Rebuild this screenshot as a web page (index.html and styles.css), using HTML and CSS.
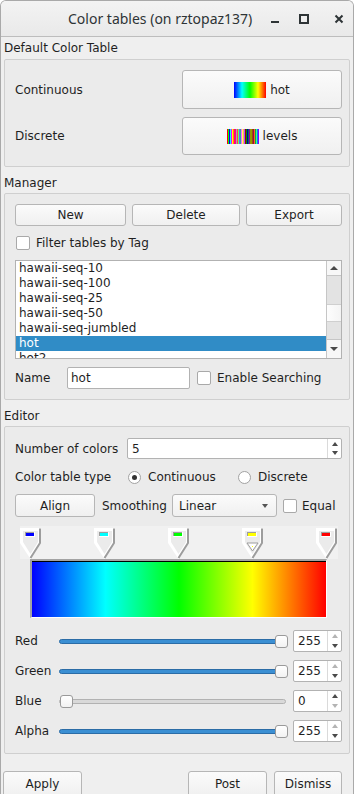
FILE: index.html
```html
<!DOCTYPE html>
<html lang="en">
<head>
  <meta charset="UTF-8">
  <title>Color tables</title>
  <link rel="stylesheet" href="styles.css">
</head>
<body>
<div class="window">

  <!-- Title bar -->
  <div class="titlebar">
    <span class="title">Color tables (on rztopaz137)</span>
    <div class="wm-buttons">
      <svg class="wm wm-min" width="10" height="10" viewBox="0 0 10 10"><path d="M1 8h8" stroke="#2e3436" stroke-width="2"/></svg>
      <svg class="wm wm-max" width="10" height="10" viewBox="0 0 10 10"><rect x="1" y="1" width="8" height="8" fill="none" stroke="#2e3436" stroke-width="2"/></svg>
      <svg class="wm wm-close" width="10" height="10" viewBox="0 0 10 10"><path d="M1.5 1.5l7 7M8.5 1.5l-7 7" stroke="#2e3436" stroke-width="2"/></svg>
    </div>
  </div>

  <div class="content">

    <!-- Default color table -->
    <div class="group-label first">Default Color Table</div>
    <div class="group defaults">
      <div class="def-row">
        <span>Continuous</span>
        <div class="btn big"><span class="swatch hot"></span>hot</div>
      </div>
      <div class="def-row">
        <span>Discrete</span>
        <div class="btn big small"><span class="swatch levels"></span>levels</div>
      </div>
    </div>

    <!-- Manager -->
    <div class="group-label">Manager</div>
    <div class="group manager">
      <div class="mgr-buttons">
        <div class="btn">New</div>
        <div class="btn">Delete</div>
        <div class="btn">Export</div>
      </div>
      <div class="check-row">
        <span class="check"></span>
        <span>Filter tables by Tag</span>
      </div>
      <div class="list">
        <div class="list-items">
          <div class="list-item">hawaii-seq-10</div>
          <div class="list-item">hawaii-seq-100</div>
          <div class="list-item">hawaii-seq-25</div>
          <div class="list-item">hawaii-seq-50</div>
          <div class="list-item">hawaii-seq-jumbled</div>
          <div class="list-item selected">hot</div>
          <div class="list-item">hot2</div>
        </div>
        <div class="scrollbar">
          <div class="sb-btn"><span class="tri-up"></span></div>
          <div class="sb-page"></div>
          <div class="sb-thumb"></div>
          <div class="sb-page"></div>
          <div class="sb-btn down"><span class="tri-down"></span></div>
        </div>
      </div>
      <div class="name-row">
        <span class="name-label">Name</span>
        <div class="input">hot</div>
        <span class="check"></span>
        <span>Enable Searching</span>
      </div>
    </div>

    <!-- Editor -->
    <div class="group-label">Editor</div>
    <div class="group editor">
      <div class="num-row">
        <span class="num-label">Number of colors</span>
        <div class="spin wide">
          <span class="spin-val">5</span>
          <div class="spin-arrows">
            <span class="arr"><span class="tri-up"></span></span>
            <span class="arr"><span class="tri-down"></span></span>
          </div>
        </div>
      </div>

      <div class="type-row">
        <span class="type-label">Color table type</span>
        <span class="radio on"></span>
        <span class="radio-text">Continuous</span>
        <span class="radio"></span>
        <span>Discrete</span>
      </div>

      <div class="align-row">
        <div class="btn align-btn">Align</div>
        <span class="smooth-label">Smoothing</span>
        <div class="combo">
          <span>Linear</span>
          <span class="tri-down"></span>
        </div>
        <span class="check"></span>
        <span>Equal</span>
      </div>

      <div class="ct-editor">
        <div class="marker-strip">
          <svg class="marker" style="left:0px" width="21" height="31" viewBox="0 0 21 31">
            <polygon points="0,0 21,0 21,15 10.5,31 0,15" fill="#fff"/>
            <polygon points="3,3 18,3 18,14 10.5,26 3,14" fill="#ebebeb"/>
            <polyline points="20,0.5 20,15 10.5,30" fill="none" stroke="#9d9d9d" stroke-width="2"/>
            <rect x="5" y="4" width="10" height="5" fill="#fff"/>
            <rect x="5" y="4" width="9" height="4" fill="#9d9d9d"/>
            <rect x="6" y="5" width="8" height="3" fill="#0000ff"/>
          </svg>
          <svg class="marker" style="left:74px" width="21" height="31" viewBox="0 0 21 31">
            <polygon points="0,0 21,0 21,15 10.5,31 0,15" fill="#fff"/>
            <polygon points="3,3 18,3 18,14 10.5,26 3,14" fill="#ebebeb"/>
            <polyline points="20,0.5 20,15 10.5,30" fill="none" stroke="#9d9d9d" stroke-width="2"/>
            <rect x="5" y="4" width="10" height="5" fill="#fff"/>
            <rect x="5" y="4" width="9" height="4" fill="#9d9d9d"/>
            <rect x="6" y="5" width="8" height="3" fill="#00ffff"/>
          </svg>
          <svg class="marker" style="left:148px" width="21" height="31" viewBox="0 0 21 31">
            <polygon points="0,0 21,0 21,15 10.5,31 0,15" fill="#fff"/>
            <polygon points="3,3 18,3 18,14 10.5,26 3,14" fill="#ebebeb"/>
            <polyline points="20,0.5 20,15 10.5,30" fill="none" stroke="#9d9d9d" stroke-width="2"/>
            <rect x="5" y="4" width="10" height="5" fill="#fff"/>
            <rect x="5" y="4" width="9" height="4" fill="#9d9d9d"/>
            <rect x="6" y="5" width="8" height="3" fill="#00ff00"/>
          </svg>
          <svg class="marker" style="left:222px" width="21" height="31" viewBox="0 0 21 31">
            <polygon points="0,0 21,0 21,15 10.5,31 0,15" fill="#fff"/>
            <polygon points="3,3 18,3 18,14 10.5,26 3,14" fill="#ebebeb"/>
            <polyline points="20,0.5 20,15 10.5,30" fill="none" stroke="#9d9d9d" stroke-width="2"/>
            <polygon points="5,15 16,15 10.5,23" fill="#fff" stroke="#9d9d9d"/>
            <rect x="10" y="18" width="1" height="1" fill="#ffff00"/>
            <rect x="5" y="4" width="10" height="5" fill="#fff"/>
            <rect x="5" y="4" width="9" height="4" fill="#9d9d9d"/>
            <rect x="6" y="5" width="8" height="3" fill="#ffff00"/>
          </svg>
          <svg class="marker" style="left:296px" width="21" height="31" viewBox="0 0 21 31">
            <polygon points="0,0 21,0 21,15 10.5,31 0,15" fill="#fff"/>
            <polygon points="3,3 18,3 18,14 10.5,26 3,14" fill="#ebebeb"/>
            <polyline points="20,0.5 20,15 10.5,30" fill="none" stroke="#9d9d9d" stroke-width="2"/>
            <rect x="5" y="4" width="10" height="5" fill="#fff"/>
            <rect x="5" y="4" width="9" height="4" fill="#9d9d9d"/>
            <rect x="6" y="5" width="8" height="3" fill="#ff0000"/>
          </svg>
        </div>
        <div class="bar"><div class="bar-grad"></div></div>
      </div>

      <div class="sliders">
        <div class="slider-row">
          <span class="sl-label">Red</span>
          <div class="track full"><span class="handle" style="left:215px"></span></div>
          <div class="spin small">
            <span class="spin-val">255</span>
            <div class="spin-arrows">
              <span class="arr"><span class="tri-up off"></span></span>
              <span class="arr"><span class="tri-down"></span></span>
            </div>
          </div>
        </div>
        <div class="slider-row">
          <span class="sl-label">Green</span>
          <div class="track full"><span class="handle" style="left:215px"></span></div>
          <div class="spin small">
            <span class="spin-val">255</span>
            <div class="spin-arrows">
              <span class="arr"><span class="tri-up off"></span></span>
              <span class="arr"><span class="tri-down"></span></span>
            </div>
          </div>
        </div>
        <div class="slider-row">
          <span class="sl-label">Blue</span>
          <div class="track"><span class="handle" style="left:0px"></span></div>
          <div class="spin small">
            <span class="spin-val">0</span>
            <div class="spin-arrows">
              <span class="arr"><span class="tri-up"></span></span>
              <span class="arr"><span class="tri-down off"></span></span>
            </div>
          </div>
        </div>
        <div class="slider-row">
          <span class="sl-label">Alpha</span>
          <div class="track full"><span class="handle" style="left:215px"></span></div>
          <div class="spin small">
            <span class="spin-val">255</span>
            <div class="spin-arrows">
              <span class="arr"><span class="tri-up off"></span></span>
              <span class="arr"><span class="tri-down"></span></span>
            </div>
          </div>
        </div>
      </div>
    </div>

    <!-- Dialog buttons -->
    <div class="bottom-row">
      <div class="btn apply">Apply</div>
      <div class="btn post">Post</div>
      <div class="btn dismiss">Dismiss</div>
    </div>
  </div>
</div>
</body>
</html>
```

FILE: styles.css
```css
* {
  box-sizing: border-box;
}

body {
  margin: 0;
  width: 354px;
  height: 794px;
  overflow: hidden;
  background: #fff;
  font-family: "DejaVu Sans", sans-serif;
  font-size: 12px;
  color: #1f1f1f;
}

.window {
  height: 794px;
  background: #efefef;
  border: 1px solid #a9a9a9;
  border-bottom: none;
  border-radius: 6px 6px 0 0;
  overflow: hidden;
}

/* Title bar */
.titlebar {
  height: 36px;
  display: flex;
  align-items: center;
  background: linear-gradient(#f3f3f3, #e9e9e9);
  border-bottom: 1px solid #bdbdbd;
}

.title {
  font-family: "Noto Sans", sans-serif;
  font-size: 14px;
  color: #2e3436;
  margin-left: 67px;
}

.wm-buttons {
  margin-left: auto;
  margin-right: 9px;
  display: flex;
  align-items: center;
}

.wm-min {
  margin-right: 19px;
}

.wm-max {
  margin-right: 25px;
}

/* Groups */
.content {
  padding: 0 3px;
}

.group-label {
  height: 20px;
  line-height: 20px;
  margin-top: 6px;
}

.group-label.first {
  margin-top: 1px;
  height: 21px;
}

.group {
  border: 1px solid #cfcfcf;
  border-radius: 2px;
  background: #ebebeb;
}

.btn {
  background: linear-gradient(#fbfbfb, #f0f0f0);
  border: 1px solid #b6b6b6;
  border-radius: 3px;
  display: flex;
  align-items: center;
  justify-content: center;
  height: 22px;
}

/* Default color table */
.defaults {
  padding: 10px 7px 11px 10px;
  display: flex;
  flex-direction: column;
  gap: 8px;
}

.def-row {
  display: flex;
  align-items: center;
  justify-content: space-between;
}

.btn.big {
  width: 160px;
  height: 39px;
  gap: 4px;
}

.btn.big.small {
  height: 38px;
}

.swatch {
  display: inline-block;
  width: 32px;
  height: 16px;
}

.swatch.hot {
  background: linear-gradient(to right, #0000ff, #00ffff 25%, #00ff00 50%, #ffff00 75%, #ff0000);
}

.swatch.levels {
  height: 15px;
  background: linear-gradient(to right, #ff0000 0 3.33%, #00ff00 3.33% 6.67%, #0000ff 6.67% 10%, #00ffff 10% 13.33%, #ff00ff 13.33% 16.67%, #ffff00 16.67% 20%, #ff8700 20% 23.33%, #ff0087 23.33% 26.67%, #a8a8a8 26.67% 30%, #ff4444 30% 33.33%, #63ff63 33.33% 36.67%, #6363ff 36.67% 40%, #28a5a5 40% 43.33%, #ff63ff 43.33% 46.67%, #ffff63 46.67% 50%, #ffaa63 50% 53.33%, #aa4fff 53.33% 56.67%, #960000 56.67% 60%, #009600 60% 63.33%, #000096 63.33% 66.67%, #006d6d 66.67% 70%, #960096 70% 73.33%, #969600 73.33% 76.67%, #965400 76.67% 80%, #a0004f 80% 83.33%, #ff681c 83.33% 86.67%, #00aa51 86.67% 90%, #44ff7c 90% 93.33%, #0082ff 93.33% 96.67%, #8200ff 96.67% 100%);
}

/* Manager */
.manager {
  padding: 10px 7px 10px 10px;
  display: flex;
  flex-direction: column;
}

.mgr-buttons {
  display: grid;
  grid-template-columns: 111px 108px 1fr;
  column-gap: 6px;
  margin-bottom: 10px;
}

.check-row {
  height: 14px;
  display: flex;
  align-items: center;
  gap: 6px;
  margin-left: 1px;
  margin-bottom: 10px;
}

.check {
  width: 14px;
  height: 14px;
  flex-shrink: 0;
  background: #fff;
  border: 1px solid #a9a9a9;
  border-radius: 2px;
}

.list {
  height: 99px;
  border: 1px solid #b2b2b2;
  background: #fff;
  display: flex;
  margin-bottom: 8px;
}

.list-items {
  flex: 1;
  overflow: hidden;
}

.list-item {
  height: 15px;
  line-height: 15px;
  padding-left: 3px;
  white-space: nowrap;
}

.list-item.selected {
  background: #308cc6;
  color: #fff;
}

.scrollbar {
  width: 15px;
  border-left: 1px solid #c6c6c6;
  display: flex;
  flex-direction: column;
}

.sb-btn {
  height: 15px;
  display: flex;
  align-items: center;
  justify-content: center;
  background: #f7f7f7;
  border-bottom: 1px solid #c6c6c6;
}

.sb-btn.down {
  border-bottom: none;
  border-top: 1px solid #c6c6c6;
  height: 19px;
}

.sb-page {
  height: 28px;
  background: #e3e3e3;
}

.sb-page + .sb-thumb + .sb-page {
  height: 17px;
}

.sb-thumb {
  height: 19px;
  background: linear-gradient(to right, #fdfdfd, #f4f4f4);
  border-top: 1px solid #cfcfcf;
  border-bottom: 1px solid #cfcfcf;
}

.tri-up {
  width: 0;
  height: 0;
  border-left: 4px solid transparent;
  border-right: 4px solid transparent;
  border-bottom: 4px solid #4a4a4a;
}

.tri-down {
  width: 0;
  height: 0;
  border-left: 4px solid transparent;
  border-right: 4px solid transparent;
  border-top: 4px solid #4a4a4a;
}

.tri-up.off {
  border-bottom-color: #b4b4b4;
}

.tri-down.off {
  border-top-color: #b4b4b4;
}

.name-row {
  height: 22px;
  display: flex;
  align-items: center;
}

.name-label {
  width: 52px;
}

.input {
  width: 123px;
  height: 22px;
  line-height: 20px;
  padding-left: 3px;
  background: #fff;
  border: 1px solid #b2b2b2;
  border-radius: 2px;
  margin-right: 7px;
}

.name-row .check {
  margin-right: 6px;
}

/* Editor */
.editor {
  padding: 11px 7px 11px 10px;
}

.num-row {
  height: 21px;
  display: flex;
  align-items: center;
  margin-bottom: 9px;
}

.num-label {
  flex: 1;
}

.spin {
  display: flex;
  background: #fff;
  border: 1px solid #b2b2b2;
  border-radius: 2px;
}

.spin.wide {
  width: 215px;
  height: 21px;
}

.spin.small {
  width: 49px;
  height: 22px;
}

.spin-val {
  flex: 1;
  padding-left: 4px;
  display: flex;
  align-items: center;
}

.spin-arrows {
  width: 14px;
  border-left: 1px solid #dadada;
  display: flex;
  flex-direction: column;
}

.arr {
  flex: 1;
  display: flex;
  align-items: center;
  justify-content: center;
}

.arr .tri-up,
.arr .tri-down {
  border-left-width: 3.5px;
  border-right-width: 3.5px;
}

.type-row {
  height: 18px;
  display: flex;
  align-items: center;
  margin-bottom: 8px;
}

.type-label {
  width: 113px;
}

.radio {
  width: 13px;
  height: 13px;
  border-radius: 50%;
  background: #fff;
  border: 1px solid #a2a2a2;
  margin-right: 7px;
  display: flex;
  align-items: center;
  justify-content: center;
}

.radio.on::after {
  content: "";
  width: 5px;
  height: 5px;
  border-radius: 50%;
  background: #333;
}

.radio-text {
  width: 90px;
}

.align-row {
  height: 23px;
  display: flex;
  align-items: center;
  margin-bottom: 9px;
}

.btn.align-btn {
  width: 80px;
  height: 23px;
  margin-right: 7px;
}

.smooth-label {
  width: 70px;
}

.combo {
  width: 105px;
  height: 23px;
  padding: 0 8px 0 6px;
  display: flex;
  align-items: center;
  justify-content: space-between;
  background: linear-gradient(#fbfbfb, #f0f0f0);
  border: 1px solid #b6b6b6;
  border-radius: 3px;
  margin-right: 6px;
}

.combo .tri-down {
  border-top-color: #555;
  border-left-width: 3.5px;
  border-right-width: 3.5px;
}

.align-row .check {
  margin-right: 5px;
}

/* Color table editor */
.ct-editor {
  margin-left: 5px;
  width: 318px;
}

.marker-strip {
  position: relative;
  height: 33px;
  background: #f1f1f1;
}

.marker {
  position: absolute;
  top: 2px;
}

.bar {
  margin-left: 10px;
  width: 297px;
  height: 59px;
  border-top: 2px solid #a3a3a3;
  border-left: 2px solid #a3a3a3;
  border-right: 1px solid #fff;
  border-bottom: 1px solid #fff;
}

.bar-grad {
  height: 100%;
  border-top: 1px solid #000;
  background: linear-gradient(to right, #0000ff, #00ffff 25%, #00ff00 50%, #ffff00 75%, #ff0000);
}

/* Sliders */
.sliders {
  margin-top: 12px;
  display: flex;
  flex-direction: column;
  gap: 8px;
}

.slider-row {
  height: 22px;
  display: flex;
  align-items: center;
}

.sl-label {
  width: 44px;
}

.track {
  position: relative;
  width: 227px;
  height: 5px;
  border-radius: 3px;
  background: #d9d9d9;
  border: 1px solid #b2b2b2;
  margin-right: 7px;
}

.track.full {
  background: #3b8fd3;
  border-color: #2b6ca6;
}

.handle {
  position: absolute;
  top: -5px;
  width: 13px;
  height: 13px;
  border-radius: 3px;
  background: linear-gradient(#ffffff, #f2f2f2);
  border: 1px solid #9a9a9a;
}

/* Dialog buttons */
.bottom-row {
  margin-top: 17px;
  display: flex;
  padding-right: 8px;
}

.btn.apply {
  width: 79px;
  height: 26px;
  margin-left: -1px;
}

.btn.post {
  width: 79px;
  height: 26px;
  margin-left: auto;
  margin-right: 7px;
}

.btn.dismiss {
  width: 68px;
  height: 26px;
}
```
